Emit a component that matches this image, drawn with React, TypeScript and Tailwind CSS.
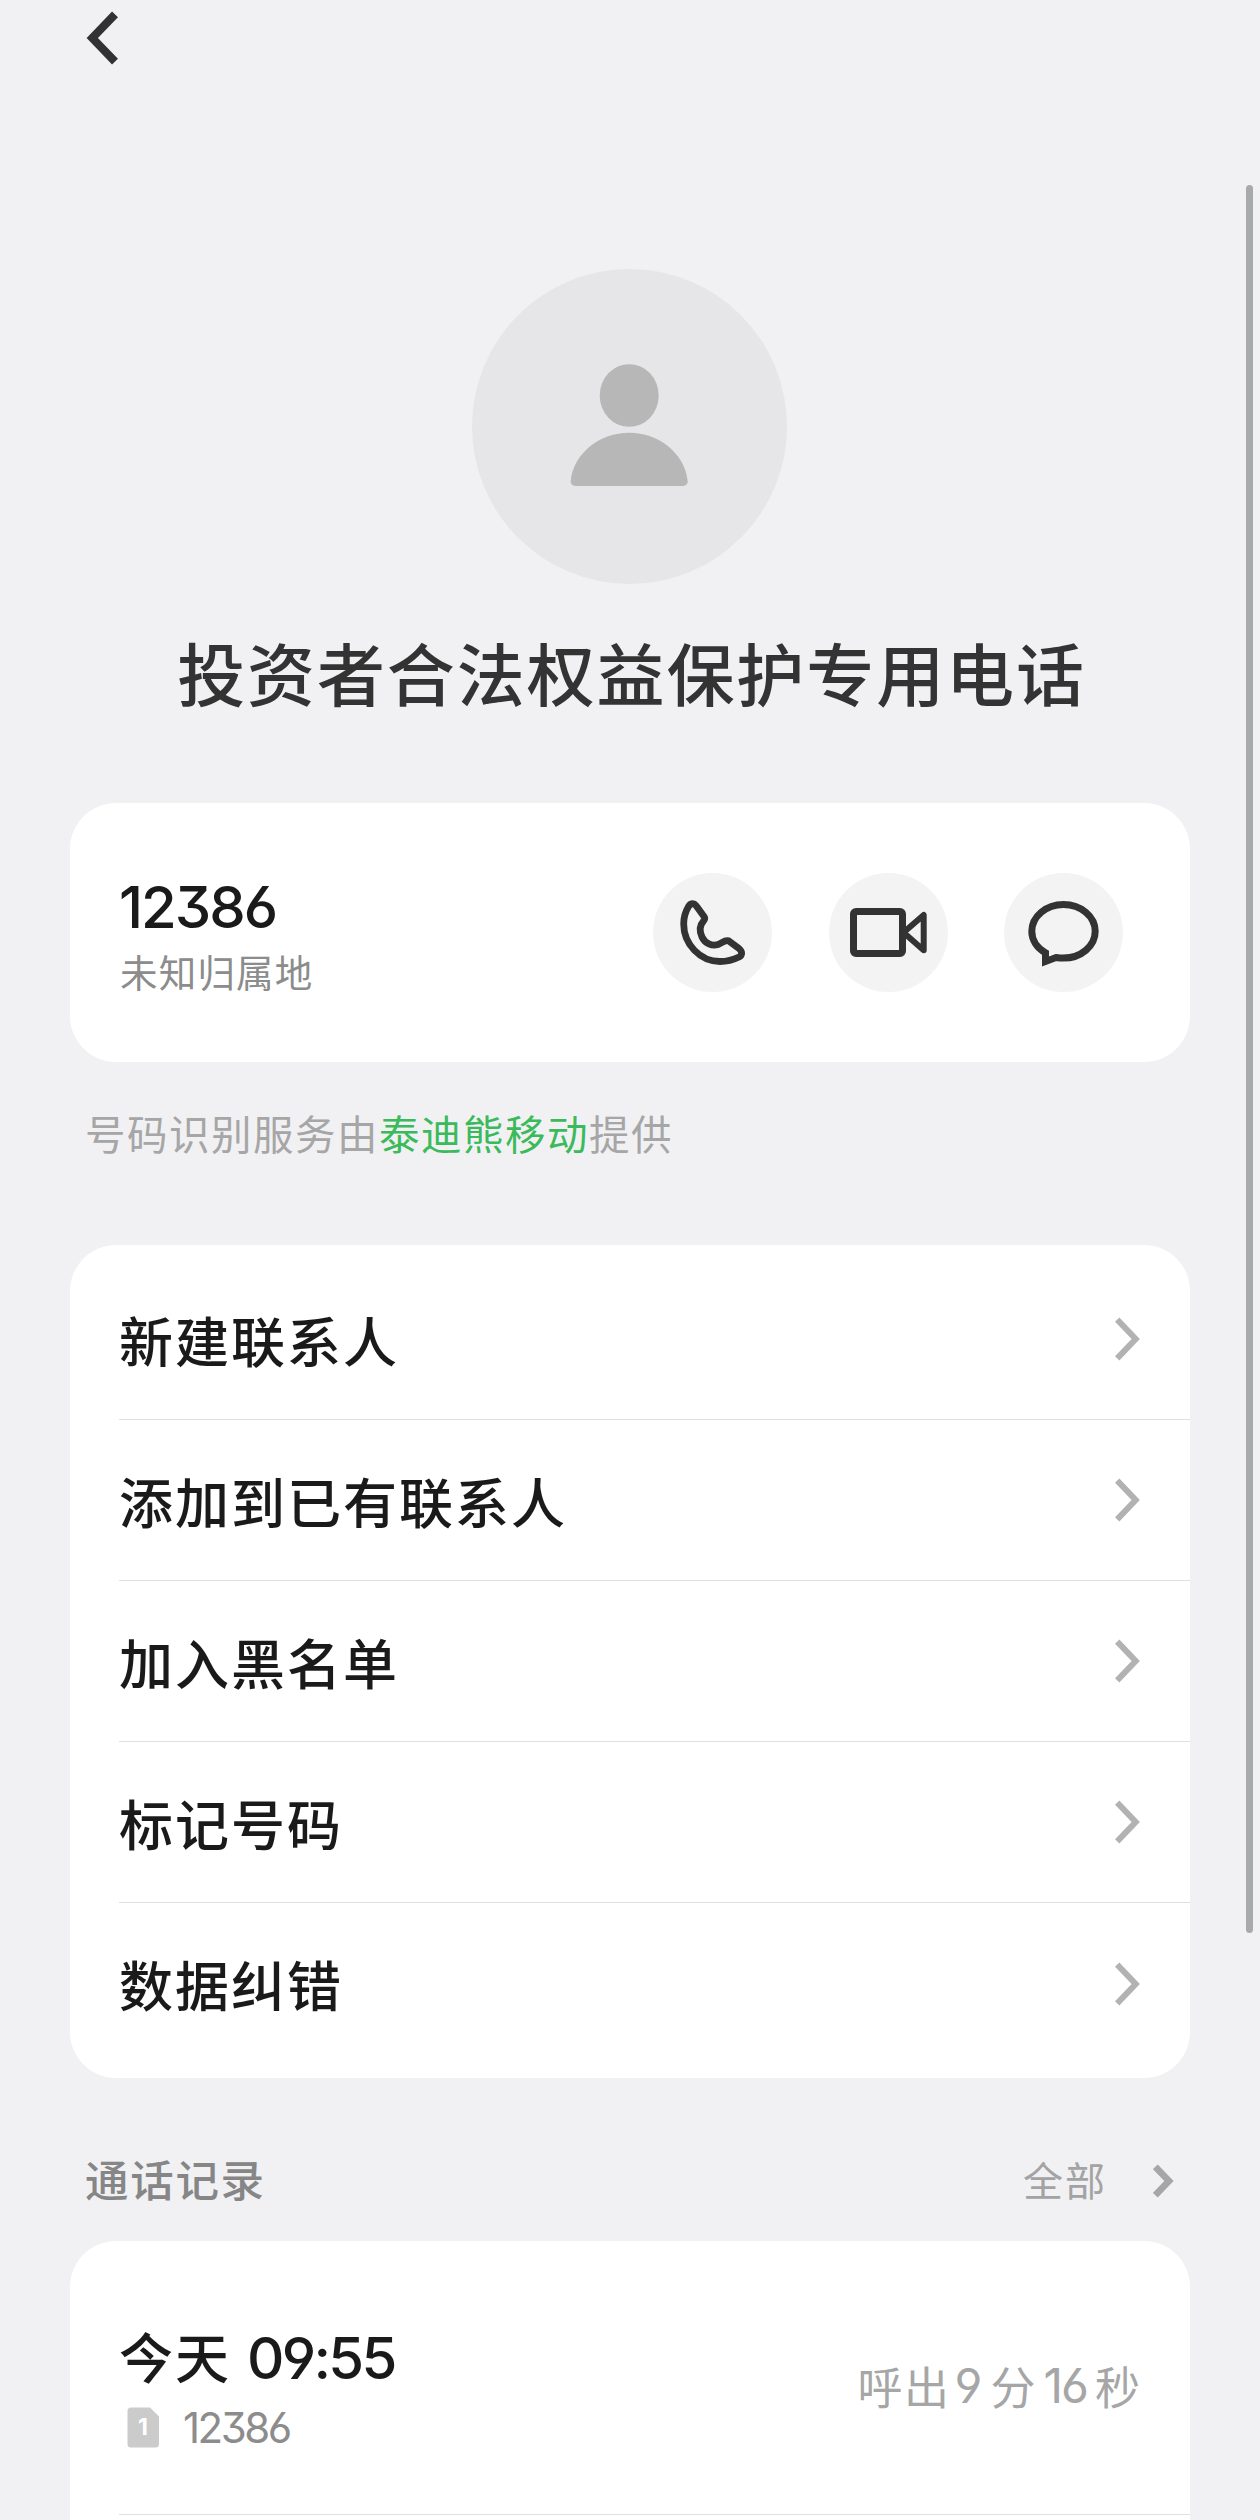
import type { ReactNode } from "react";

const menuItems = ["新建联系人", "添加到已有联系人", "加入黑名单", "标记号码", "数据纠错"];

const DIGITS =
  "font-['Inter','Noto_Sans_CJK_SC',sans-serif] [font-feature-settings:'ss01','cv03','cv04']";

function BackIcon() {
  return (
    <svg viewBox="0 0 40 60" className="w-10 h-15" fill="none">
      <path d="M35 6.300 12.300 30 35 53.700" stroke="#323232" strokeWidth="8.2" />
    </svg>
  );
}

function RowChevron() {
  return (
    <svg viewBox="0 0 25 44" className="w-[25px] h-11" fill="none">
      <path d="M2.200 2.700 20.700 22 2.200 41.300" stroke="#b2b2b2" strokeWidth="6" />
    </svg>
  );
}

function SmallChevron() {
  return (
    <svg viewBox="0 0 21 34" className="w-[21px] h-[34px]" fill="none">
      <path d="M2.300 2.800 15.900 17 2.300 31.200" stroke="#a6a6a8" strokeWidth="6.8" />
    </svg>
  );
}

function AvatarIcon() {
  return (
    <svg viewBox="0 0 315 315" className="size-[315px]" fill="#b7b7b8">
      <ellipse cx="157.200" cy="126.500" rx="29.500" ry="31.300" />
      <path d="M103.200 217a4.500 4.500 0 0 1-4.500-5C101.700 184 128 163.800 157.200 163.800S212.700 184 215.700 212a4.500 4.500 0 0 1-4.500 5Z" />
    </svg>
  );
}

function PhoneIcon() {
  return (
    <svg viewBox="0 0 119 119" className="size-full" fill="none" stroke="#333" strokeWidth="6.8" strokeLinejoin="round">
      <path d="M35.500 33.500C37.500 30 41 30 43 32.500L51 43.500C52 45 51.800 46.500 50.500 48C46.500 52.500 46.500 58.500 49 64C52 70.500 59 73.500 65 71.500C69 70 72 66.500 75.500 67.800L86 75.500C89.500 78.500 89.500 82 86 84C79 87.500 73 88.500 67 88.500C47 88.500 30.700 71 30.700 51C30.700 44 32.500 38.500 35.500 33.500Z" />
    </svg>
  );
}

function VideoIcon() {
  return (
    <svg viewBox="0 0 119 119" className="size-full" fill="none" stroke="#333" strokeLinejoin="round">
      <rect x="24.500" y="38.500" width="49" height="42" rx="2.500" strokeWidth="7" />
      <path d="M74.500 59.500 94.700 42V77.300Z" strokeWidth="6" />
    </svg>
  );
}

function MessageIcon() {
  return (
    <svg viewBox="0 0 119 119" className="size-full" fill="none" stroke="#333" strokeWidth="7">
      <path d="M41.500 88.500V79.700C33 75 27.800 67 27.800 58.300C27.800 43.500 42 31.500 59.500 31.500S91.200 43.500 91.200 58.300S77 85.100 59.500 85.100C57 85.100 54.500 84.900 52 84.500Z" />
    </svg>
  );
}

function SimIcon() {
  return (
    <div className="relative w-8 h-[41px]">
      <svg viewBox="0 0 32 41" className="size-full" fill="#cbcbcb">
        <path d="M4 .5H23L32 9.500V37a3.500 3.500 0 0 1-3.500 3.500H4A3.500 3.500 0 0 1 .5 37V4A3.500 3.500 0 0 1 4 .5Z" />
      </svg>
      <span className={`absolute inset-0 flex items-center justify-center text-[23px] leading-none font-bold text-white ${DIGITS}`}>
        1
      </span>
    </div>
  );
}

function ActionButton({ label, children }: { label: string; children: ReactNode }) {
  return (
    <button type="button" aria-label={label} className="size-[119px] rounded-full bg-[#f3f3f3] cursor-pointer">
      {children}
    </button>
  );
}

export default function App() {
  return (
    <div className="relative w-[1260px] h-[2520px] overflow-hidden bg-[#f1f1f4] px-[70px] font-['Noto_Sans_CJK_SC',sans-serif] text-[#1a1a1a]">
      <header className="h-[269px] pt-2 pl-2.5">
        <button type="button" aria-label="返回" className="block cursor-pointer">
          <BackIcon />
        </button>
      </header>

      {/* Аватар та назва */}
      <section className="h-[534px] flex flex-col items-center">
        <div className="mr-px size-[315px] rounded-full bg-[#e6e6e8]">
          <AvatarIcon />
        </div>
        <h1 className="mt-[38px] pl-[3px] text-[68px] leading-[100px] font-medium tracking-[1.9px] whitespace-nowrap text-[#333]">
          投资者合法权益保护专用电话
        </h1>
      </section>

      {/* Номер і кнопки дзвінка */}
      <section className="h-[259px] flex items-center justify-between rounded-[46px] bg-white pl-[49px] pr-[67px]">
        <div className="pt-2">
          <p className={`text-[58px] leading-[66px] font-medium tracking-[-2px] ${DIGITS}`}>12386</p>
          <p className="pt-[3px] pl-px text-[37.5px] leading-[56px] tracking-[1.2px] text-[#8c8c8c]">未知归属地</p>
        </div>
        <div className="flex gap-[56.5px]">
          <ActionButton label="语音通话">
            <PhoneIcon />
          </ActionButton>
          <ActionButton label="视频通话">
            <VideoIcon />
          </ActionButton>
          <ActionButton label="信息">
            <MessageIcon />
          </ActionButton>
        </div>
      </section>

      <p className="h-[183px] pt-[41px] pl-[15px] text-[40.5px] leading-[60px] tracking-[1.5px] text-[#a6a6a6]">
        号码识别服务由<span className="text-[#3bba5b]">泰迪熊移动</span>提供
      </p>

      <ul className="rounded-[46px] bg-white py-3.5 pl-[49px]">
        {menuItems.map((item) => (
          <li
            key={item}
            className="h-[161px] flex items-center justify-between border-b border-[#e0e0e0] pr-[50px] last:border-0"
          >
            <span className="text-[54px] font-medium tracking-[2px]">{item}</span>
            <RowChevron />
          </li>
        ))}
      </ul>

      <div className="h-[163px] flex items-center justify-between pt-[42px] pl-[15px] pr-4">
        <h2 className="pb-1 text-[43.5px] font-medium tracking-[1.7px] text-[#868686]">通话记录</h2>
        <div className="flex items-center gap-[46px]">
          <span className="pb-1 text-[40px] tracking-[2px] text-[#a3a3a3]">全部</span>
          <SmallChevron />
        </div>
      </div>

      <section className="h-[400px] rounded-t-[46px] bg-white pl-[49px]">
        <div className="h-[274px] flex items-center justify-between border-b border-[#e0e0e0] pr-[50px]">
          <div className="pt-4">
            <p className="text-[54px] leading-[76px] font-medium">
              <span className="tracking-[2px]">今天</span>
              <span className={`ml-4 text-[58px] tracking-[-2.7px] ${DIGITS}`}>09:55</span>
            </p>
            <div className="flex items-center gap-6 pt-[5px] pl-2">
              <SimIcon />
              <span className={`pt-0.5 text-[42px] leading-[50px] tracking-[-2.5px] text-[#8c8c8c] ${DIGITS}`}>12386</span>
            </div>
          </div>
          <p className="flex items-center pt-[17px] text-[45px] leading-[60px] text-[#a6a6a6]">
            <span className="tracking-[1.5px]">呼出</span>
            <span className={`ml-1 mr-2 text-[48px] ${DIGITS}`}>9</span>
            <span>分</span>
            <span className={`mx-2 text-[48px] tracking-[-2px] ${DIGITS}`}>16</span>
            <span>秒</span>
          </p>
        </div>
      </section>

      {/* Смуга прокрутки */}
      <div className="absolute right-[7px] top-[185px] h-[1748px] w-[7px] rounded-full bg-[#a8a9ab]" />
    </div>
  );
}
